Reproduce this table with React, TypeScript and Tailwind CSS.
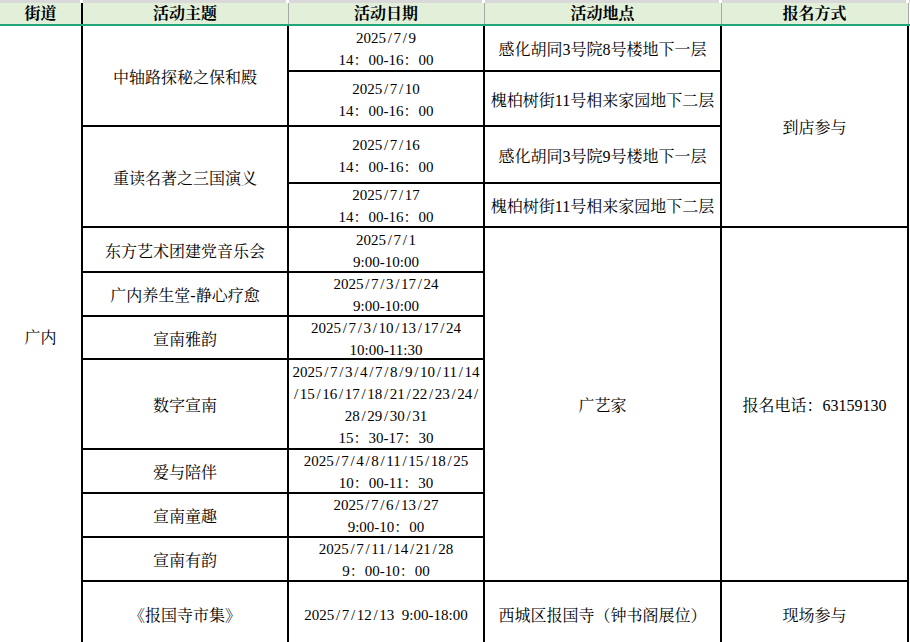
import React from "react";

function D({ t }: { t: string }) {
  return (
    <>
      {t.split("").map((c, i) =>
        c === "/" ? (
          <span key={i} className="inline-block w-[0.5em] text-center">
            {c}
          </span>
        ) : (
          <React.Fragment key={i}>{c}</React.Fragment>
        )
      )}
    </>
  );
}

function DateCell({ lines, cls }: { lines: string[]; cls: string }) {
  return (
    <div className={`bg-white flex flex-col items-center justify-center pt-[2px] text-[15px] leading-[22px] whitespace-pre ${cls}`}>
      {lines.map((l, i) => (
        <div key={i}>
          <D t={l} />
        </div>
      ))}
    </div>
  );
}

function Cell({ children, cls }: { children: React.ReactNode; cls: string }) {
  return (
    <div className={`bg-white flex items-center justify-center pt-[4px] text-center text-[16px] leading-[22px] ${cls}`}>
      {children}
    </div>
  );
}

export default function App() {
  return (
    <div className="w-[910px] h-[642px] overflow-hidden bg-white text-black font-['Liberation_Serif','Noto_Serif_CJK_SC','Noto_Sans_CJK_SC',serif]">
      {/* top strip */}
      <div className="flex h-[3px]">
        <div className="w-[80px] bg-[#d9d9d9]" />
        <div className="w-[3px]" />
        <div className="w-[203px] bg-[#d9d9d9]" />
        <div className="w-[3px]" />
        <div className="w-[193px] bg-[#d9d9d9]" />
        <div className="w-[3px]" />
        <div className="w-[234px] bg-[#d9d9d9]" />
        <div className="w-[3px]" />
        <div className="w-[184px] bg-[#d9d9d9]" />
        <div className="w-[3px]" />
        <div className="w-[1px] bg-[#d9d9d9]" />
      </div>
      {/* header */}
      <div className="flex h-[23px] bg-[#e2f0da] border-b-2 border-[#22a676] text-[16px] font-bold leading-[22px]">
        <div className="w-[81px] text-center">街道</div>
        <div className="w-[2px] bg-black" />
        <div className="w-[204px] text-center">活动主题</div>
        <div className="w-[2px] flex justify-center"><div className="w-[1px] bg-[#a8a8a8]" /></div>
        <div className="w-[194px] text-center">活动日期</div>
        <div className="w-[2px] flex justify-center"><div className="w-[1px] bg-[#a8a8a8]" /></div>
        <div className="w-[235px] text-center">活动地点</div>
        <div className="w-[2px] flex justify-center"><div className="w-[1px] bg-[#a8a8a8]" /></div>
        <div className="w-[185px] text-center">报名方式</div>
        <div className="w-[2px] flex justify-center"><div className="w-[1px] bg-[#a8a8a8]" /></div>
        <div className="flex-1 bg-white" />
      </div>
      {/* body */}
      <div className="grid w-[909px] bg-black border-r-2 border-black gap-[2px] grid-cols-[81px_204px_194px_235px_185px] grid-rows-[44px_53px_55px_42px_43px_42px_41px_88px_42px_42px_42px_64px]">
        <Cell cls="col-start-1 row-start-1 row-span-12">广内</Cell>

        <Cell cls="col-start-2 row-start-1 row-span-2">中轴路探秘之保和殿</Cell>
        <DateCell cls="col-start-3 row-start-1" lines={["2025/7/9", "14：00-16：00"]} />
        <Cell cls="col-start-4 row-start-1">感化胡同3号院8号楼地下一层</Cell>
        <DateCell cls="col-start-3 row-start-2" lines={["2025/7/10", "14：00-16：00"]} />
        <Cell cls="col-start-4 row-start-2">槐柏树街11号相来家园地下二层</Cell>

        <Cell cls="col-start-2 row-start-3 row-span-2">重读名著之三国演义</Cell>
        <DateCell cls="col-start-3 row-start-3" lines={["2025/7/16", "14：00-16：00"]} />
        <Cell cls="col-start-4 row-start-3">感化胡同3号院9号楼地下一层</Cell>
        <DateCell cls="col-start-3 row-start-4" lines={["2025/7/17", "14：00-16：00"]} />
        <Cell cls="col-start-4 row-start-4">槐柏树街11号相来家园地下二层</Cell>

        <Cell cls="col-start-5 row-start-1 row-span-4">到店参与</Cell>

        <Cell cls="col-start-2 row-start-5">东方艺术团建党音乐会</Cell>
        <DateCell cls="col-start-3 row-start-5" lines={["2025/7/1", "9:00-10:00"]} />

        <Cell cls="col-start-2 row-start-6">广内养生堂-静心疗愈</Cell>
        <DateCell cls="col-start-3 row-start-6" lines={["2025/7/3/17/24", "9:00-10:00"]} />

        <Cell cls="col-start-2 row-start-7">宣南雅韵</Cell>
        <DateCell cls="col-start-3 row-start-7" lines={["2025/7/3/10/13/17/24", "10:00-11:30"]} />

        <Cell cls="col-start-2 row-start-8">数字宣南</Cell>
        <DateCell
          cls="col-start-3 row-start-8"
          lines={["2025/7/3/4/7/8/9/10/11/14", "/15/16/17/18/21/22/23/24/", "28/29/30/31", "15：30-17：30"]}
        />

        <Cell cls="col-start-2 row-start-9">爱与陪伴</Cell>
        <DateCell cls="col-start-3 row-start-9" lines={["2025/7/4/8/11/15/18/25", "10：00-11：30"]} />

        <Cell cls="col-start-2 row-start-10">宣南童趣</Cell>
        <DateCell cls="col-start-3 row-start-10" lines={["2025/7/6/13/27", "9:00-10：00"]} />

        <Cell cls="col-start-2 row-start-11">宣南有韵</Cell>
        <DateCell cls="col-start-3 row-start-11" lines={["2025/7/11/14/21/28", "9：00-10：00"]} />

        <Cell cls="col-start-4 row-start-5 row-span-7">广艺家</Cell>
        <Cell cls="col-start-5 row-start-5 row-span-7">报名电话：63159130</Cell>

        <Cell cls="col-start-2 row-start-12">《报国寺市集》</Cell>
        <DateCell cls="col-start-3 row-start-12" lines={["2025/7/12/13  9:00-18:00"]} />
        <Cell cls="col-start-4 row-start-12">西城区报国寺（钟书阁展位）</Cell>
        <Cell cls="col-start-5 row-start-12">现场参与</Cell>
      </div>
    </div>
  );
}
